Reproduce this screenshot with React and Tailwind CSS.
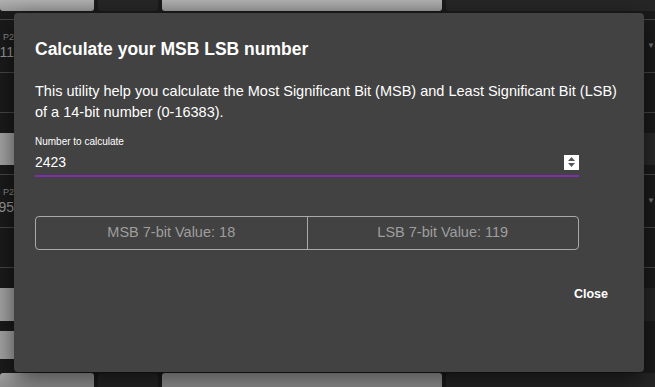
import { useState } from 'react';

function BgRow({ value }) {
    return (
        <div className="flex h-[53px] border-b border-[#474747]">
            <div className="w-[14px] flex flex-col justify-center items-end overflow-hidden text-[#8a8a8a]">
                <span className="text-[9px] leading-[12px]">P2</span>
                <span className="text-[14px] leading-[18px] text-[#9a9a9a]">{value}</span>
            </div>
            <div className="flex-1" />
            <div className="w-[11px] flex items-center justify-end text-[8px] text-[#777]">▼</div>
        </div>
    );
}

function Background() {
    return (
        <div className="absolute inset-0 flex flex-col bg-[#1b1b1b]">
            {/* top strip */}
            <div className="flex gap-[4px] h-[11px]">
                <div className="w-[94px] rounded-b-[3px] bg-gradient-to-b from-[#b0b0b0] to-[#9a9a9a]" />
                <div className="w-[60px] rounded-b-[3px] bg-[#262626]" />
                <div className="w-[280px] rounded-b-[3px] bg-gradient-to-b from-[#b0b0b0] to-[#9a9a9a]" />
                <div className="flex-1 rounded-bl-[3px] bg-[#262626]" />
            </div>
            <div className="h-[9px] border-b border-[#474747]" />
            <BgRow value="11" />
            <div className="h-[40px] border-b border-[#474747]" />
            <div className="h-[20px]" />
            <div className="flex h-[32px]">
                <div className="w-[14px] bg-[#a5a5a5]" />
                <div className="flex-1" />
                <div className="w-[11px] bg-[#2a2a2a]" />
            </div>
            <div className="h-[10px] border-b border-[#474747]" />
            <BgRow value="95" />
            <div className="h-[40px] border-b border-[#474747]" />
            <div className="h-[20px]" />
            <div className="flex h-[33px]">
                <div className="w-[14px] bg-[#a5a5a5]" />
                <div className="flex-1" />
                <div className="w-[11px] bg-[#262626]" />
            </div>
            <div className="h-[10px]" />
            <div className="flex h-[28px]">
                <div className="w-[14px] bg-[#a5a5a5]" />
                <div className="flex-1" />
            </div>
            <div className="h-[14px]" />
            <div className="flex gap-[4px] flex-1">
                <div className="w-[94px] rounded-t-[3px] bg-gradient-to-b from-[#a8a8a8] to-[#909090]" />
                <div className="w-[60px] rounded-t-[3px] bg-[#262626]" />
                <div className="w-[280px] rounded-t-[3px] bg-gradient-to-b from-[#a8a8a8] to-[#909090]" />
                <div className="flex-1 rounded-tl-[3px] bg-[#262626]" />
            </div>
        </div>
    );
}

export default function App() {
    const [num, setNum] = useState(2423);
    const msb = (num >> 7) & 0x7f;
    const lsb = num & 0x7f;

    return (
        <div className="relative w-[655px] h-[387px] overflow-hidden font-['Liberation_Sans',Arial,sans-serif]">
            <Background />

            {/* Dialog */}
            <div className="absolute left-[14px] top-[13px] w-[630px] h-[359px] bg-[#424242] rounded-[4px] shadow-[0_8px_24px_rgba(0,0,0,0.6)] flex flex-col pt-[24px] pl-[21px] pr-[24px] text-white">
                <h2 className="text-[17.5px] leading-[24px] font-bold">Calculate your MSB LSB number</h2>

                <p className="mt-[20px] text-[14.5px] leading-[21px] text-white">
                    This utility help you calculate the Most Significant Bit (MSB) and Least Significant Bit (LSB) of a 14-bit number (0-16383).
                </p>

                <div className="mt-[13px] w-[544px] flex flex-col">
                    <label className="text-[10px] leading-[12px] text-white">Number to calculate</label>
                    <div className="flex items-center h-[24px] mt-[2px]">
                        <span className="flex-1 text-[14px] leading-[18px]">{num}</span>
                        <div className="w-[15px] h-[15px] bg-white flex flex-col items-center justify-center gap-[2px]">
                            <svg width="7" height="4" viewBox="0 0 7 4"><path d="M3.5 0L7 4H0z" fill="#555" /></svg>
                            <svg width="7" height="4" viewBox="0 0 7 4"><path d="M0 0h7L3.5 4z" fill="#555" /></svg>
                        </div>
                    </div>
                    <div className="h-[2px] bg-[#7b2fa8] mt-[1px]" />
                </div>

                <div className="mt-[39px] w-[544px] h-[34px] flex border border-[#a9a9a9] rounded-[4px] text-[14.5px] text-[#9e9e9e]">
                    <button onClick={() => setNum(num)} className="flex-1 flex items-center justify-center border-r border-[#a9a9a9]">
                        MSB 7-bit Value: {msb}
                    </button>
                    <button className="flex-1 flex items-center justify-center">
                        LSB 7-bit Value: {lsb}
                    </button>
                </div>

                <div className="mt-[35px] w-[573px] flex justify-end">
                    <button className="text-[12.5px] font-bold leading-[18px] text-white">Close</button>
                </div>
            </div>
        </div>
    );
}
